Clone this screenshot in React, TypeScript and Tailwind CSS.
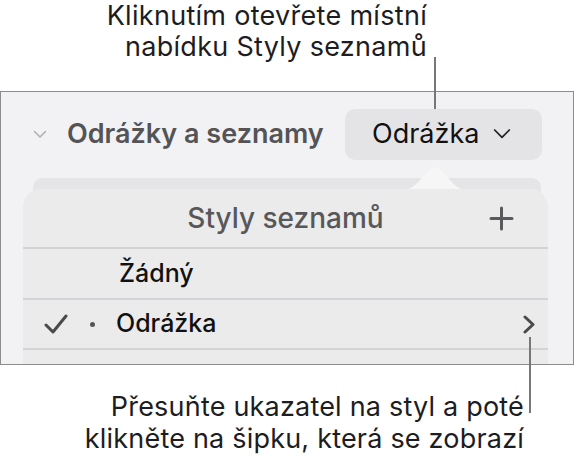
import React from "react";

const font = { fontFamily: "Inter, 'Noto Sans', sans-serif" };

function SmallChevron({ className, width = 1.6 }: { className?: string; width?: number }) {
  return (
    <svg viewBox="0 0 14 9" className={className} fill="none" stroke="currentColor" strokeWidth={width} strokeLinecap="round" strokeLinejoin="round">
      <path d="M1.5 1.5 L7 7 L12.5 1.5" />
    </svg>
  );
}

export default function App() {
  return (
    <div className="relative w-[575px] h-[466px] bg-white overflow-hidden text-black" style={font}>
      {/* top callout */}
      <div className="pr-[148px] text-right text-[27px] leading-[31px] tracking-[0.3px] text-[#1d1d1f]">
        <p>Kliknutím otevřete místní</p>
        <p>nabídku Styly seznamů</p>
      </div>

      {/* frame */}
      <div className="relative mt-[29px] w-[574px] h-[274px] border border-[#8d8d8d] bg-[#f2f2f4] overflow-hidden">
        <div className="flex items-center h-[52px] mt-[16px] pl-[32px] pr-[31px]">
          <SmallChevron className="w-[14px] h-[9px] text-[#b0b0b3]" />
          <span className="ml-[20px] text-[27px] font-semibold text-[#545456]">Odrážky a seznamy</span>
          <div className="ml-auto flex items-center h-[51px] w-[197px] rounded-[10px] bg-[#e4e4e7] pl-[27px]">
            <span className="text-[27px] text-[#111]">Odrážka</span>
            <SmallChevron className="ml-[12px] w-[22px] h-[12px] text-[#222]" width={1.3} />
          </div>
        </div>

        {/* panel under the popover */}
        <div className="mt-[18px] mx-[32px] h-[40px] rounded-[9px] bg-[#e5e5e8]" />

        {/* popover arrow */}
        <svg className="absolute left-[403px] top-[74px] w-[62px] h-[24px]" viewBox="0 0 62 24">
          <path d="M0 24 C13 24 23 1 31 1 C39 1 49 24 62 24 Z" fill="#f6f6f7" />
        </svg>

        {/* popover */}
        <div className="absolute left-[22px] top-[97px] w-[525px] h-[200px] rounded-t-[18px] bg-[#ebebeb]">
          <div className="relative flex items-center justify-center h-[58px]">
            <span className="text-[28px] font-medium text-[#58585a]">Styly seznamů</span>
            <svg className="absolute left-[466px] top-[17px] w-[25px] h-[25px]" viewBox="0 0 25 25" stroke="#5a5a5c" strokeWidth="3" strokeLinecap="round">
              <path d="M12.5 2 V23 M2 12.5 H23" />
            </svg>
          </div>
          <div className="h-[2px] bg-[#d3d3d5]" />
          <div className="flex items-center h-[49px] pl-[96px]">
            <span className="text-[25px] font-medium text-[#111]">Žádný</span>
          </div>
          <div className="h-[2px] bg-[#d3d3d5]" />
          <div className="flex items-center h-[48px]">
            <svg className="ml-[21px] w-[24px] h-[20px]" viewBox="0 0 24 20" fill="none" stroke="#4a4a4c" strokeWidth="3" strokeLinecap="round" strokeLinejoin="round">
              <path d="M2 11 L9 18 L22 2" />
            </svg>
            <span className="ml-[22px] w-[5px] h-[5px] rounded-full bg-[#555]" />
            <span className="ml-[21px] text-[25px] font-medium text-[#111]">Odrážka</span>
            <svg className="ml-auto mr-[13px] w-[12px] h-[19px]" viewBox="0 0 12 19" fill="none" stroke="#4a4a4c" strokeWidth="3" strokeLinecap="round" strokeLinejoin="round">
              <path d="M2 2 L10 9.5 L2 17" />
            </svg>
          </div>
          <div className="h-[2px] bg-[#d3d3d5]" />
        </div>
      </div>

      {/* bottom callout */}
      <div className="mt-[26px] pr-[51px] text-right text-[27px] leading-[32px] tracking-[0.2px] text-[#1d1d1f]">
        <p>Přesuňte ukazatel na styl a poté</p>
        <p>klikněte na šipku, která se zobrazí</p>
      </div>

      {/* leader lines */}
      <div className="absolute left-[434px] top-[57px] w-[2px] h-[52px] bg-[#777]" />
      <div className="absolute left-[529px] top-[337px] w-[2px] h-[76px] bg-[#777]" />
    </div>
  );
}
